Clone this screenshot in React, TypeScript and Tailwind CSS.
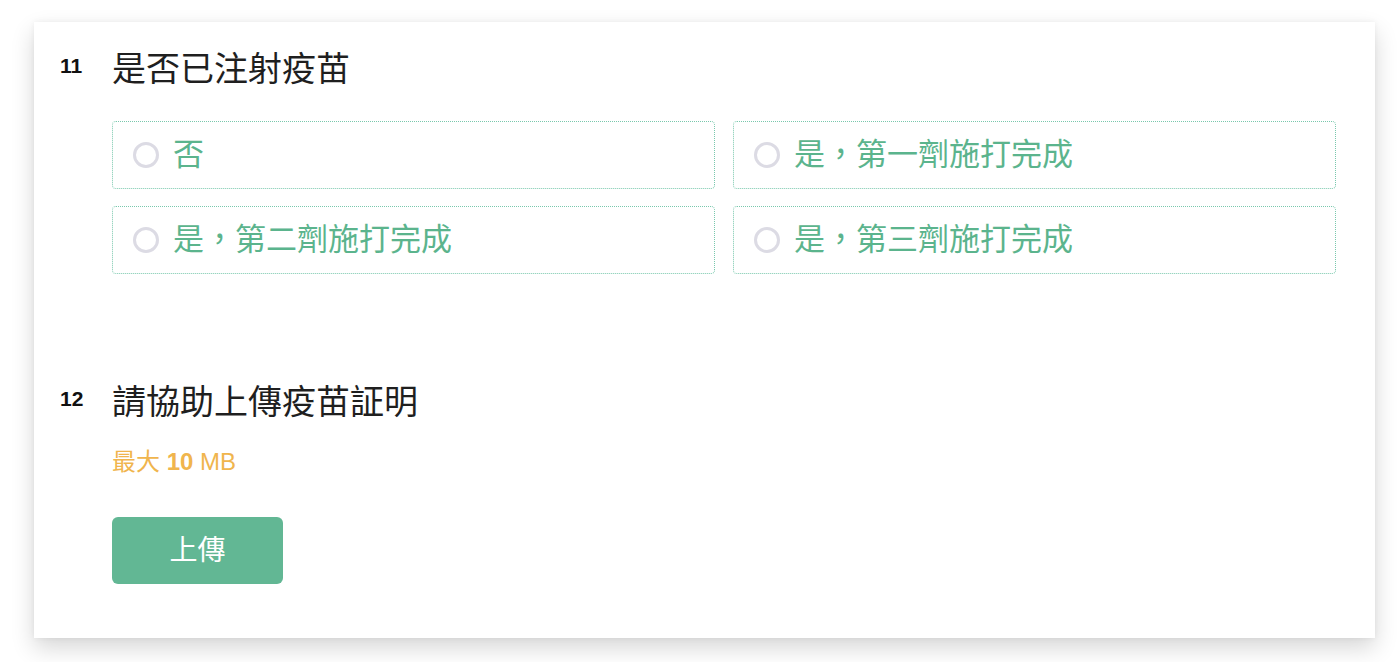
const font = { fontFamily: '"Liberation Sans", "Noto Sans CJK TC", sans-serif' };

const options = ['否', '是，第一劑施打完成', '是，第二劑施打完成', '是，第三劑施打完成'];

function Radio({ label }: { label: string }) {
  return (
    <label className="flex h-[68px] cursor-pointer items-center rounded-[4px] border border-dotted border-[#79c8ad] pl-[20px]">
      <span className="h-[26px] w-[26px] shrink-0 rounded-full border-[3px] border-[#dcdbe4] bg-white" />
      <span className="ml-[14px] text-[31px] leading-[40px] text-[#5bb48d]">{label}</span>
    </label>
  );
}

export default function App() {
  return (
    <div className="h-[662px] w-full bg-white pl-[34px] pr-[25px] pt-[22px]" style={font}>
      <div className="h-[616px] bg-white pl-[26px] pr-[39px] pt-[26px] shadow-[0_10px_22px_rgba(0,0,0,0.16),0_0_6px_rgba(0,0,0,0.06)]">
        {/* Q11 */}
        <div className="flex">
          <div className="w-[52px] pt-[7px] text-[21px] font-bold leading-[22px] text-[#111]">11</div>
          <div className="flex-1">
            <h2 className="text-[34px] leading-[42px] text-[#1f1f1f]">是否已注射疫苗</h2>
            <div className="mt-[31px] grid grid-cols-2 gap-x-[18px] gap-y-[17px]">
              {options.map((o) => (
                <Radio key={o} label={o} />
              ))}
            </div>
          </div>
        </div>

        {/* Q12 */}
        <div className="mt-[107px] flex">
          <div className="w-[52px] pt-[7px] text-[21px] font-bold leading-[22px] text-[#111]">12</div>
          <div className="flex-1">
            <h2 className="text-[34px] leading-[42px] text-[#1f1f1f]">請協助上傳疫苗証明</h2>
            <p className="mt-[25px] text-[24px] leading-[28px] text-[#f0b54d]">
              最大 <span className="font-bold">10</span> MB
            </p>
            <button className="mt-[41px] h-[67px] w-[171px] rounded-[6px] bg-[#62b794] text-[28px] text-white">上傳</button>
          </div>
        </div>
      </div>
    </div>
  );
}
